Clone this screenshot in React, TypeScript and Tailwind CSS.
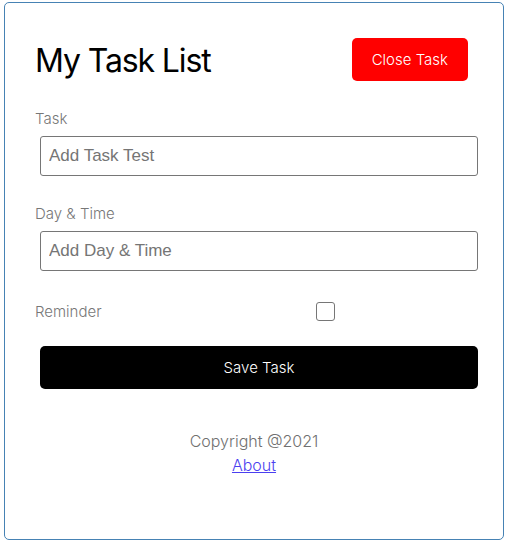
export default function App() {
  return (
    <div className="min-h-[543px] bg-white font-['Inter',sans-serif] text-black">
      <div className="ml-[4px] mt-[2px] flex h-[538px] w-[500px] flex-col rounded-[5px] border border-[steelblue] p-[30px]">
        <header className="mb-5 flex items-center justify-between">
          <h1 className="pt-1 text-[32px] font-normal leading-[48px] tracking-[-0.035em]">
            My Task List
          </h1>
          <button className="m-[5px] rounded-[5px] bg-[#ff0000] px-5 pb-[9px] pt-[11px] text-[15px] font-light leading-[22.5px] text-white">
            Close Task
          </button>
        </header>

        <form className="flex flex-col">
          <div className="mb-5 flex flex-col">
            <label className="pt-[2px] text-[15px] font-light leading-[22.5px] text-[#777]">
              Task
            </label>
            <input
              type="text"
              placeholder="Add Task Test"
              className="mb-[5px] ml-[5px] mt-[6px] h-10 w-full rounded-[3px] border border-[#767676] pl-[8px] pr-[7px] py-[3px] font-['Liberation_Sans',Arial,sans-serif] text-[17px] placeholder:text-[#757575]"
            />
          </div>

          <div className="mb-5 flex flex-col">
            <label className="pt-[1.5px] text-[15px] font-light leading-[22.5px] text-[#777]">
              Day &amp; Time
            </label>
            <input
              type="text"
              placeholder="Add Day & Time"
              className="mb-[5px] ml-[5px] mt-[6px] h-10 w-full rounded-[3px] border border-[#767676] pl-[8px] pr-[7px] py-[3px] font-['Liberation_Sans',Arial,sans-serif] text-[17px] placeholder:text-[#757575]"
            />
          </div>

          <div className="mb-5 flex h-[30px] items-center">
            <label className="flex-1 pt-[2px] text-[15px] font-light leading-[22.5px] text-[#777]">
              Reminder
            </label>
            <div className="mx-[5px] flex flex-[2] justify-center">
              <span className="h-[19px] w-[19px] rounded-[3px] border border-[#767676] bg-white" />
            </div>
          </div>

          <button
            type="button"
            className="ml-[5px] w-full rounded-[5px] bg-black px-5 pb-[9px] pt-[11px] text-[15px] font-light leading-[22.5px] text-white"
          >
            Save Task
          </button>
        </form>

        <footer className="mt-10 flex flex-col items-center text-[16px] font-light leading-6">
          <p className="text-[#707070]">Copyright @2021</p>
          <a href="#about" className="text-[#4b3ff0] underline">
            About
          </a>
        </footer>
      </div>
    </div>
  );
}
